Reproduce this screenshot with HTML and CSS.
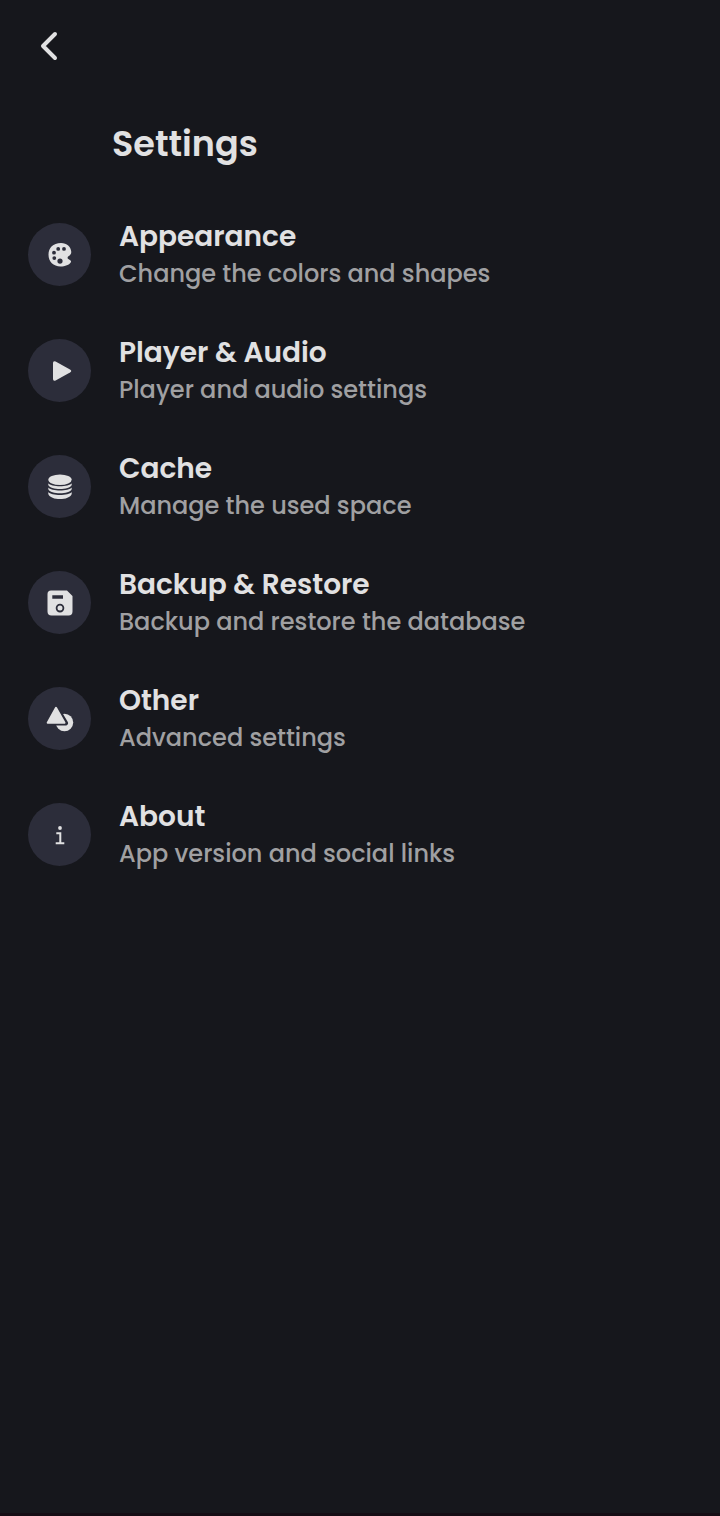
FILE: index.html
```html
<!DOCTYPE html>
<html lang="en">
<head>
<meta charset="utf-8">
<meta name="viewport" content="width=device-width, initial-scale=1">
<title>Settings</title>
<link rel="stylesheet" href="styles.css">
</head>
<body>
<header class="topbar">
  <button class="back" type="button" aria-label="Back">
    <svg class="back-icon" viewBox="0 0 36 36" aria-hidden="true"><path d="M23 6 11 18l12 12"/></svg>
  </button>
</header>
<main class="page">
  <h1 class="title">Settings</h1>
  <nav class="list" aria-label="Settings">
    <a class="row" href="#appearance">
      <span class="badge"><svg class="icon" viewBox="4 4 63 63" aria-hidden="true"><path fill-rule="evenodd" d="M37 24C29 24 24.500 29 24.500 35.800C24.500 42.700 29.300 47.500 36.500 47.500C41 47.500 45.500 45.800 47 43C47.500 40.800 44 40.600 43.500 39C43.500 36.500 47.300 37 47.300 33C46.800 27.500 43 24 37 24ZM34.200 28a1.900 1.900 0 1 0 0 3.800a1.900 1.900 0 1 0 0-3.800ZM40 28a1.900 1.900 0 1 0 0 3.800a1.900 1.900 0 1 0 0-3.800ZM30 31.800a1.900 1.900 0 1 0 0 3.800a1.900 1.900 0 1 0 0-3.800ZM30.300 37.200a1.900 1.900 0 1 0 0 3.800a1.900 1.900 0 1 0 0-3.800ZM36 39.500a2.600 2.600 0 1 0 0 5.200a2.600 2.600 0 1 0 0-5.200Z"/></svg></span>
      <span class="text"><span class="name">Appearance</span><span class="hint">Change the colors and shapes</span></span>
    </a>
    <a class="row" href="#player">
      <span class="badge"><svg class="icon" viewBox="4 4 63 63" aria-hidden="true"><path d="M29 28Q29 25.500 31.600 26.500L46 34.500Q48.500 36 46 37.500L31.600 45.500Q29 46.500 29 44Z"/></svg></span>
      <span class="text"><span class="name">Player &amp; Audio</span><span class="hint">Player and audio settings</span></span>
    </a>
    <a class="row" href="#cache">
      <span class="badge"><svg class="icon" viewBox="4 4 63 63" aria-hidden="true"><ellipse cx="36" cy="28.800" rx="11.700" ry="5.300"/><path d="M24.300 32.300C27 36.300 45 36.300 47.700 32.300V34C45.500 39.300 26.500 39.300 24.300 34ZM24.300 36.600C27 40.600 45 40.600 47.700 36.600V38.300C45.500 43.600 26.500 43.600 24.300 38.300ZM24.300 41C27 45 45 45 47.700 41V43C45.500 49.800 26.500 49.800 24.300 43Z"/></svg></span>
      <span class="text"><span class="name">Cache</span><span class="hint">Manage the used space</span></span>
    </a>
    <a class="row" href="#backup">
      <span class="badge"><svg class="icon" viewBox="4 4 63 63" aria-hidden="true"><path fill-rule="evenodd" d="M27 23.500H43L48.500 29V44.500Q48.500 48.500 44.500 48.500H27.500Q23.500 48.500 23.500 44.500V27Q23.500 23.500 27 23.500ZM28.300 28.300V31.700H39V28.300ZM36 36.800a4.300 4.300 0 1 0 0 8.600a4.300 4.300 0 1 0 0-8.600ZM36 38.600a2.500 2.500 0 1 1 0 5a2.500 2.500 0 1 1 0-5Z"/></svg></span>
      <span class="text"><span class="name">Backup &amp; Restore</span><span class="hint">Backup and restore the database</span></span>
    </a>
    <a class="row" href="#other">
      <span class="badge"><svg class="icon" viewBox="4 4 63 63" aria-hidden="true"><circle cx="40.500" cy="39.500" r="8.700"/><path class="cutout" d="M32 24 41.500 40H23.500Z"/><path class="triangle" d="M32 24.800 40.500 39.800H23.700Z"/></svg></span>
      <span class="text"><span class="name">Other</span><span class="hint">Advanced settings</span></span>
    </a>
    <a class="row" href="#about">
      <span class="badge"><svg class="icon" viewBox="4 4 63 63" aria-hidden="true"><circle cx="36" cy="29" r="1.900"/><path class="info" d="M32.300 34.200H36.300V44.300M31.700 44.300H40.300"/></svg></span>
      <span class="text"><span class="name">About</span><span class="hint">App version and social links</span></span>
    </a>
  </nav>
</main>
</body>
</html>
```
FILE: styles.css
```css
* { box-sizing: border-box; }

body {
  display: flex;
  flex-direction: column;
  min-height: 100vh;
  margin: 0;
  background: #16171c;
  border-bottom: 3px solid #150d14;
  color: #e1e1e2;
  font-family: Poppins, Inter, sans-serif;
}

.topbar { padding: 28px 32px 0; }

.back {
  display: block;
  padding: 0;
  border: 0;
  background: none;
  color: inherit;
  cursor: pointer;
}

.back-icon {
  display: block;
  width: 36px;
  height: 36px;
  fill: none;
  stroke: currentColor;
  stroke-width: 4;
  stroke-linecap: round;
  stroke-linejoin: round;
}

.title {
  margin: 56px 28px 28px 112px;
  font-size: 35px;
  line-height: 48px;
  font-weight: 600;
}

.list { display: flex; flex-direction: column; }

.row {
  display: flex;
  align-items: center;
  gap: 28px;
  min-height: 116px;
  padding: 0 28px;
  color: inherit;
  text-decoration: none;
}

.badge {
  flex: none;
  width: 63px;
  height: 63px;
  border-radius: 50%;
  background: #2c2d3a;
}

.icon { display: block; width: 63px; height: 63px; fill: #e1e1e2; }

.cutout { fill: #2c2d3a; stroke: #2c2d3a; stroke-width: 5; stroke-linejoin: round; }

.triangle { stroke: #e1e1e2; stroke-width: 2; stroke-linejoin: round; }

.info { fill: none; stroke: #e1e1e2; stroke-width: 2; }

.text { display: flex; flex-direction: column; padding-top: 4px; }

.name { font-size: 28px; line-height: 36px; font-weight: 600; }

.hint { color: #a0a0a2; font-size: 24px; line-height: 38px; font-weight: 500; }
```
